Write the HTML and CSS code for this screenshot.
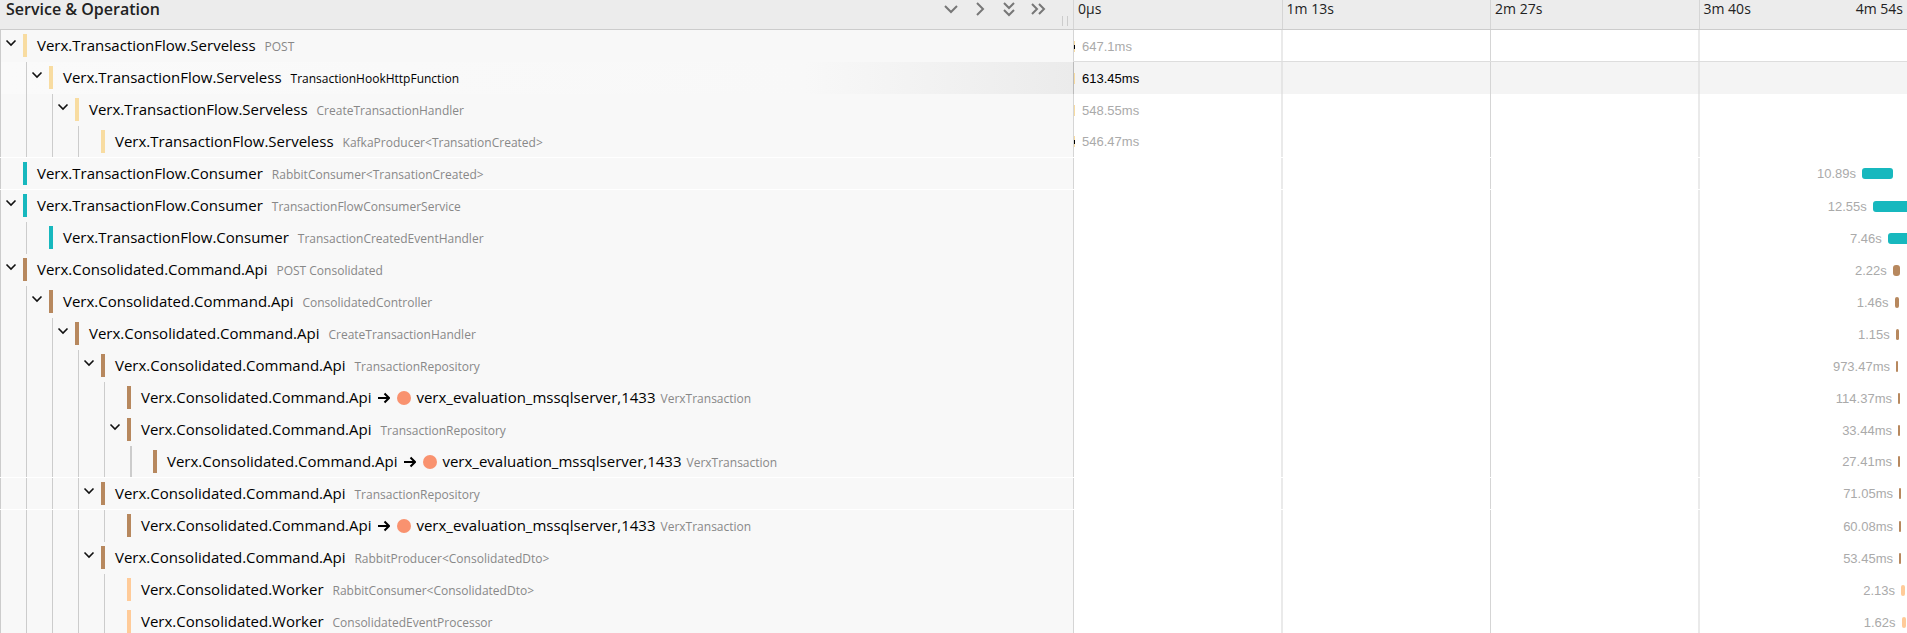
FILE: index.html
```
<!DOCTYPE html>
<html lang="en">
<head>
<meta charset="utf-8">
<title>Trace timeline</title>
<link rel="stylesheet" href="styles.css">
</head>
<body>
<svg class="defs" aria-hidden="true">
  <symbol id="chev" viewBox="0 0 12 12"><path d="M1.500 3.500 6 8l4.500-4.500"/></symbol>
  <symbol id="arrow" viewBox="0 0 12 12"><path d="M0 6h11M6.500 1.500 11 6l-4.500 4.500"/></symbol>
</svg>
<main class="trace">
  <header class="row head">
    <div class="head-name">
      <h1 class="title">Service &amp; Operation</h1>
      <div class="tools">
        <button class="tool" aria-label="Expand +1"><svg viewBox="0 0 16 16"><path d="M2 5l6 6 6-6"/></svg></button>
        <button class="tool" aria-label="Collapse +1"><svg viewBox="0 0 16 16"><path d="M5 2l6 6-6 6"/></svg></button>
        <button class="tool" aria-label="Expand all"><svg viewBox="0 0 16 16"><path d="M3 2l5 5 5-5M3 9l5 5 5-5"/></svg></button>
        <button class="tool" aria-label="Collapse all"><svg viewBox="0 0 16 16"><path d="M2 3l5 5-5 5M9 3l5 5-5 5"/></svg></button>
      </div>
      <span class="grip"></span>
    </div>
    <div class="ticks"><span>0µs</span><span>1m 13s</span><span>2m 27s</span><span class="last"><b>3m 40s</b><b>4m 54s</b></span></div>
  </header>

  <div class="row yellow">
    <div class="name"><span class="lvl"><button class="toggle" aria-label="Toggle"><svg><use href="#chev"/></svg></button></span><a class="svc" href="#">Verx.TransactionFlow.Serveless <small>POST</small></a></div>
    <div class="track"><span class="bar start log"></span><span class="after">647.1ms</span></div>
  </div>
  <div class="row yellow selected">
    <div class="name"><span class="lvl"></span><span class="lvl"><button class="toggle" aria-label="Toggle"><svg><use href="#chev"/></svg></button></span><a class="svc" href="#">Verx.TransactionFlow.Serveless <small>TransactionHookHttpFunction</small></a></div>
    <div class="track"><span class="bar start"></span><span class="after">613.45ms</span></div>
  </div>
  <div class="row yellow">
    <div class="name"><span class="lvl"></span><span class="lvl"></span><span class="lvl"><button class="toggle" aria-label="Toggle"><svg><use href="#chev"/></svg></button></span><a class="svc" href="#">Verx.TransactionFlow.Serveless <small>CreateTransactionHandler</small></a></div>
    <div class="track"><span class="bar start"></span><span class="after">548.55ms</span></div>
  </div>
  <div class="row yellow split">
    <div class="name"><span class="lvl"></span><span class="lvl"></span><span class="lvl"></span><span class="lvl"></span><a class="svc" href="#">Verx.TransactionFlow.Serveless <small>KafkaProducer&lt;TransationCreated&gt;</small></a></div>
    <div class="track"><span class="bar start log"></span><span class="after">546.47ms</span></div>
  </div>
  <div class="row teal split">
    <div class="name"><span class="lvl"></span><a class="svc" href="#">Verx.TransactionFlow.Consumer <small>RabbitConsumer&lt;TransationCreated&gt;</small></a></div>
    <div class="track"><span class="lead" style="width:94.6%">10.89s</span><span class="bar" style="width:3.7%"></span></div>
  </div>
  <div class="row teal">
    <div class="name"><span class="lvl"><button class="toggle" aria-label="Toggle"><svg><use href="#chev"/></svg></button></span><a class="svc" href="#">Verx.TransactionFlow.Consumer <small>TransactionFlowConsumerService</small></a></div>
    <div class="track"><span class="lead" style="width:95.9%">12.55s</span><span class="bar" style="width:4.3%"></span></div>
  </div>
  <div class="row teal">
    <div class="name"><span class="lvl"></span><span class="lvl"></span><a class="svc" href="#">Verx.TransactionFlow.Consumer <small>TransactionCreatedEventHandler</small></a></div>
    <div class="track"><span class="lead" style="width:97.7%">7.46s</span><span class="bar" style="width:2.5%"></span></div>
  </div>
  <div class="row brown">
    <div class="name"><span class="lvl"><button class="toggle" aria-label="Toggle"><svg><use href="#chev"/></svg></button></span><a class="svc" href="#">Verx.Consolidated.Command.Api <small>POST Consolidated</small></a></div>
    <div class="track"><span class="lead" style="width:98.3%">2.22s</span><span class="bar" style="width:0.84%"></span></div>
  </div>
  <div class="row brown">
    <div class="name"><span class="lvl"></span><span class="lvl"><button class="toggle" aria-label="Toggle"><svg><use href="#chev"/></svg></button></span><a class="svc" href="#">Verx.Consolidated.Command.Api <small>ConsolidatedController</small></a></div>
    <div class="track"><span class="lead" style="width:98.5%">1.46s</span><span class="bar" style="width:0.5%"></span></div>
  </div>
  <div class="row brown">
    <div class="name"><span class="lvl"></span><span class="lvl"></span><span class="lvl"><button class="toggle" aria-label="Toggle"><svg><use href="#chev"/></svg></button></span><a class="svc" href="#">Verx.Consolidated.Command.Api <small>CreateTransactionHandler</small></a></div>
    <div class="track"><span class="lead" style="width:98.65%">1.15s</span><span class="bar" style="width:0.36%"></span></div>
  </div>
  <div class="row brown">
    <div class="name"><span class="lvl"></span><span class="lvl"></span><span class="lvl"></span><span class="lvl"><button class="toggle" aria-label="Toggle"><svg><use href="#chev"/></svg></button></span><a class="svc" href="#">Verx.Consolidated.Command.Api <small>TransactionRepository</small></a></div>
    <div class="track"><span class="lead" style="width:98.68%">973.47ms</span><span class="bar" style="width:0.24%"></span></div>
  </div>
  <div class="row brown">
    <div class="name"><span class="lvl"></span><span class="lvl"></span><span class="lvl"></span><span class="lvl"></span><span class="lvl"></span><a class="svc db" href="#">Verx.Consolidated.Command.Api <svg class="arrow"><use href="#arrow"/></svg><span class="dot"></span>verx_evaluation_mssqlserver,1433 <small>VerxTransaction</small></a></div>
    <div class="track"><span class="lead" style="width:98.92%">114.37ms</span><span class="bar" style="width:0.24%"></span></div>
  </div>
  <div class="row brown">
    <div class="name"><span class="lvl"></span><span class="lvl"></span><span class="lvl"></span><span class="lvl"></span><span class="lvl"><button class="toggle" aria-label="Toggle"><svg><use href="#chev"/></svg></button></span><a class="svc" href="#">Verx.Consolidated.Command.Api <small>TransactionRepository</small></a></div>
    <div class="track"><span class="lead" style="width:98.92%">33.44ms</span><span class="bar" style="width:0.24%"></span></div>
  </div>
  <div class="row brown split">
    <div class="name"><span class="lvl"></span><span class="lvl"></span><span class="lvl"></span><span class="lvl"></span><span class="lvl"></span><span class="lvl deep"></span><a class="svc db" href="#">Verx.Consolidated.Command.Api <svg class="arrow"><use href="#arrow"/></svg><span class="dot"></span>verx_evaluation_mssqlserver,1433 <small>VerxTransaction</small></a></div>
    <div class="track"><span class="lead" style="width:98.92%">27.41ms</span><span class="bar" style="width:0.24%"></span></div>
  </div>
  <div class="row brown split">
    <div class="name"><span class="lvl"></span><span class="lvl"></span><span class="lvl"></span><span class="lvl"><button class="toggle" aria-label="Toggle"><svg><use href="#chev"/></svg></button></span><a class="svc" href="#">Verx.Consolidated.Command.Api <small>TransactionRepository</small></a></div>
    <div class="track"><span class="lead" style="width:99.04%">71.05ms</span><span class="bar" style="width:0.24%"></span></div>
  </div>
  <div class="row brown">
    <div class="name"><span class="lvl"></span><span class="lvl"></span><span class="lvl"></span><span class="lvl"></span><span class="lvl"></span><a class="svc db" href="#">Verx.Consolidated.Command.Api <svg class="arrow"><use href="#arrow"/></svg><span class="dot"></span>verx_evaluation_mssqlserver,1433 <small>VerxTransaction</small></a></div>
    <div class="track"><span class="lead" style="width:99.04%">60.08ms</span><span class="bar" style="width:0.24%"></span></div>
  </div>
  <div class="row brown">
    <div class="name"><span class="lvl"></span><span class="lvl"></span><span class="lvl"></span><span class="lvl"><button class="toggle" aria-label="Toggle"><svg><use href="#chev"/></svg></button></span><a class="svc" href="#">Verx.Consolidated.Command.Api <small>RabbitProducer&lt;ConsolidatedDto&gt;</small></a></div>
    <div class="track"><span class="lead" style="width:99.04%">53.45ms</span><span class="bar" style="width:0.24%"></span></div>
  </div>
  <div class="row peach">
    <div class="name"><span class="lvl"></span><span class="lvl"></span><span class="lvl"></span><span class="lvl"></span><span class="lvl"></span><a class="svc" href="#">Verx.Consolidated.Worker <small>RabbitConsumer&lt;ConsolidatedDto&gt;</small></a></div>
    <div class="track"><span class="lead" style="width:99.28%">2.13s</span><span class="bar" style="width:0.5%"></span></div>
  </div>
  <div class="row peach">
    <div class="name"><span class="lvl"></span><span class="lvl"></span><span class="lvl"></span><span class="lvl"></span><span class="lvl"></span><a class="svc" href="#">Verx.Consolidated.Worker <small>ConsolidatedEventProcessor</small></a></div>
    <div class="track"><span class="lead" style="width:99.35%">1.62s</span><span class="bar" style="width:0.5%"></span></div>
  </div>
</main>
</body>
</html>
```
FILE: styles.css
```
* { box-sizing: border-box; }

body {
  margin: 0;
  height: 100vh;
  overflow: hidden;
  background: #fff;
  color: #000;
  font-family: "Segoe UI", "Open Sans", "Noto Sans", sans-serif;
  font-size: 15px;
}

.defs { display: none; }

button {
  padding: 0;
  border: 0;
  background: none;
  color: #111;
  cursor: pointer;
}

svg {
  display: block;
  fill: none;
  stroke: currentColor;
}

.row {
  --line: #d5d5d5;
  display: grid;
  grid-template-columns: 56.27% 1fr;
  height: 32px;
}

/* Header */
.head {
  height: 30px;
  background: #ececec;
  border-bottom: 1px solid #ccc;
  color: #222;
  line-height: 18px;
}

.head-name {
  display: flex;
  padding-left: 6px;
}

.title {
  flex: 1;
  margin: 0;
  font-size: 16px;
  font-weight: 600;
  line-height: 18px;
}

.tools {
  display: flex;
  gap: 13px;
  padding-right: 16px;
}

.tool {
  width: 16px;
  height: 18px;
  color: #777;
}

.tool svg {
  width: 16px;
  height: 16px;
  stroke-width: 2;
}

.grip {
  align-self: end;
  width: 6px;
  height: 10px;
  margin: 0 5px 3px 0;
  border: solid #ccc;
  border-width: 0 1px;
}

.ticks {
  display: grid;
  grid-template-columns: repeat(4, 1fr);
  font-size: 14px;
}

.ticks > span {
  border-left: 1px solid #d5d5d5;
  padding: 0 4px;
}

.ticks b { font-weight: 400; }

.ticks .last {
  display: flex;
  justify-content: space-between;
}

/* Name column */
.name {
  display: flex;
  min-width: 0;
  background: #f8f8f8;
}

.lvl {
  width: 26px;
  border-left: 1px solid #ccc;
}

.lvl.deep { border-left-width: 2px; }

.lvl:nth-last-child(2) { width: 23px; }

.toggle {
  display: block;
  width: 22px;
  height: 26px;
  padding-left: 4px;
}

.toggle svg {
  width: 12px;
  height: 12px;
  stroke-width: 1.6;
}

.svc {
  display: flex;
  align-items: baseline;
  height: 23px;
  margin-top: 4px;
  padding-left: 10px;
  border-left: 4px solid var(--color);
  color: #000;
  line-height: 22px;
  text-decoration: none;
  white-space: nowrap;
}

.svc small {
  margin-left: 9px;
  color: #888;
  font-size: 12px;
}

.svc.db small { margin-left: 5px; }

.arrow {
  align-self: center;
  width: 12px;
  height: 12px;
  margin: 0 7px 0 7px;
  stroke-width: 2;
}

.dot {
  align-self: center;
  width: 14px;
  height: 14px;
  margin-right: 5px;
  border-radius: 50%;
  background: #f9926f;
}

/* Timeline column */
.track {
  display: flex;
  align-items: center;
  min-width: 0;
  overflow: hidden;
  border-left: 1px solid transparent;
  background:
    linear-gradient(90deg, var(--line) 1px, transparent 1px) 0 0 / 25% 100% border-box,
    var(--fill, #fff) border-box;
  color: #aaa;
  font-family: "Liberation Sans", Arial, sans-serif;
  font-size: 13px;
}

.lead {
  flex: none;
  padding-right: 6px;
  text-align: right;
}

.bar {
  flex: none;
  height: 11px;
  border-radius: 3px;
  background: var(--color);
}

.start {
  width: 1px;
  border-radius: 0;
}

.log {
  background: linear-gradient(var(--color) 4px, #000 4px 8px, var(--color) 8px);
}

.after { padding-left: 7px; }

/* Row states */
.selected .name { background: linear-gradient(90deg, #fafafa, #f8f8f8 75%, #ebebeb); }

.selected .track {
  --fill: #f4f4f4;
  border-left-color: #bbb;
  box-shadow: 0 -1px #ddd, 0 1px #ddd;
  color: #000;
}

.selected small { color: #000; }

.split { border-bottom: 1px solid #fff; }

/* Service colours */
.yellow { --color: #f8dca1; }
.teal { --color: #17b8be; }
.brown { --color: #b7885e; }
.peach { --color: #ffcb99; }
```
